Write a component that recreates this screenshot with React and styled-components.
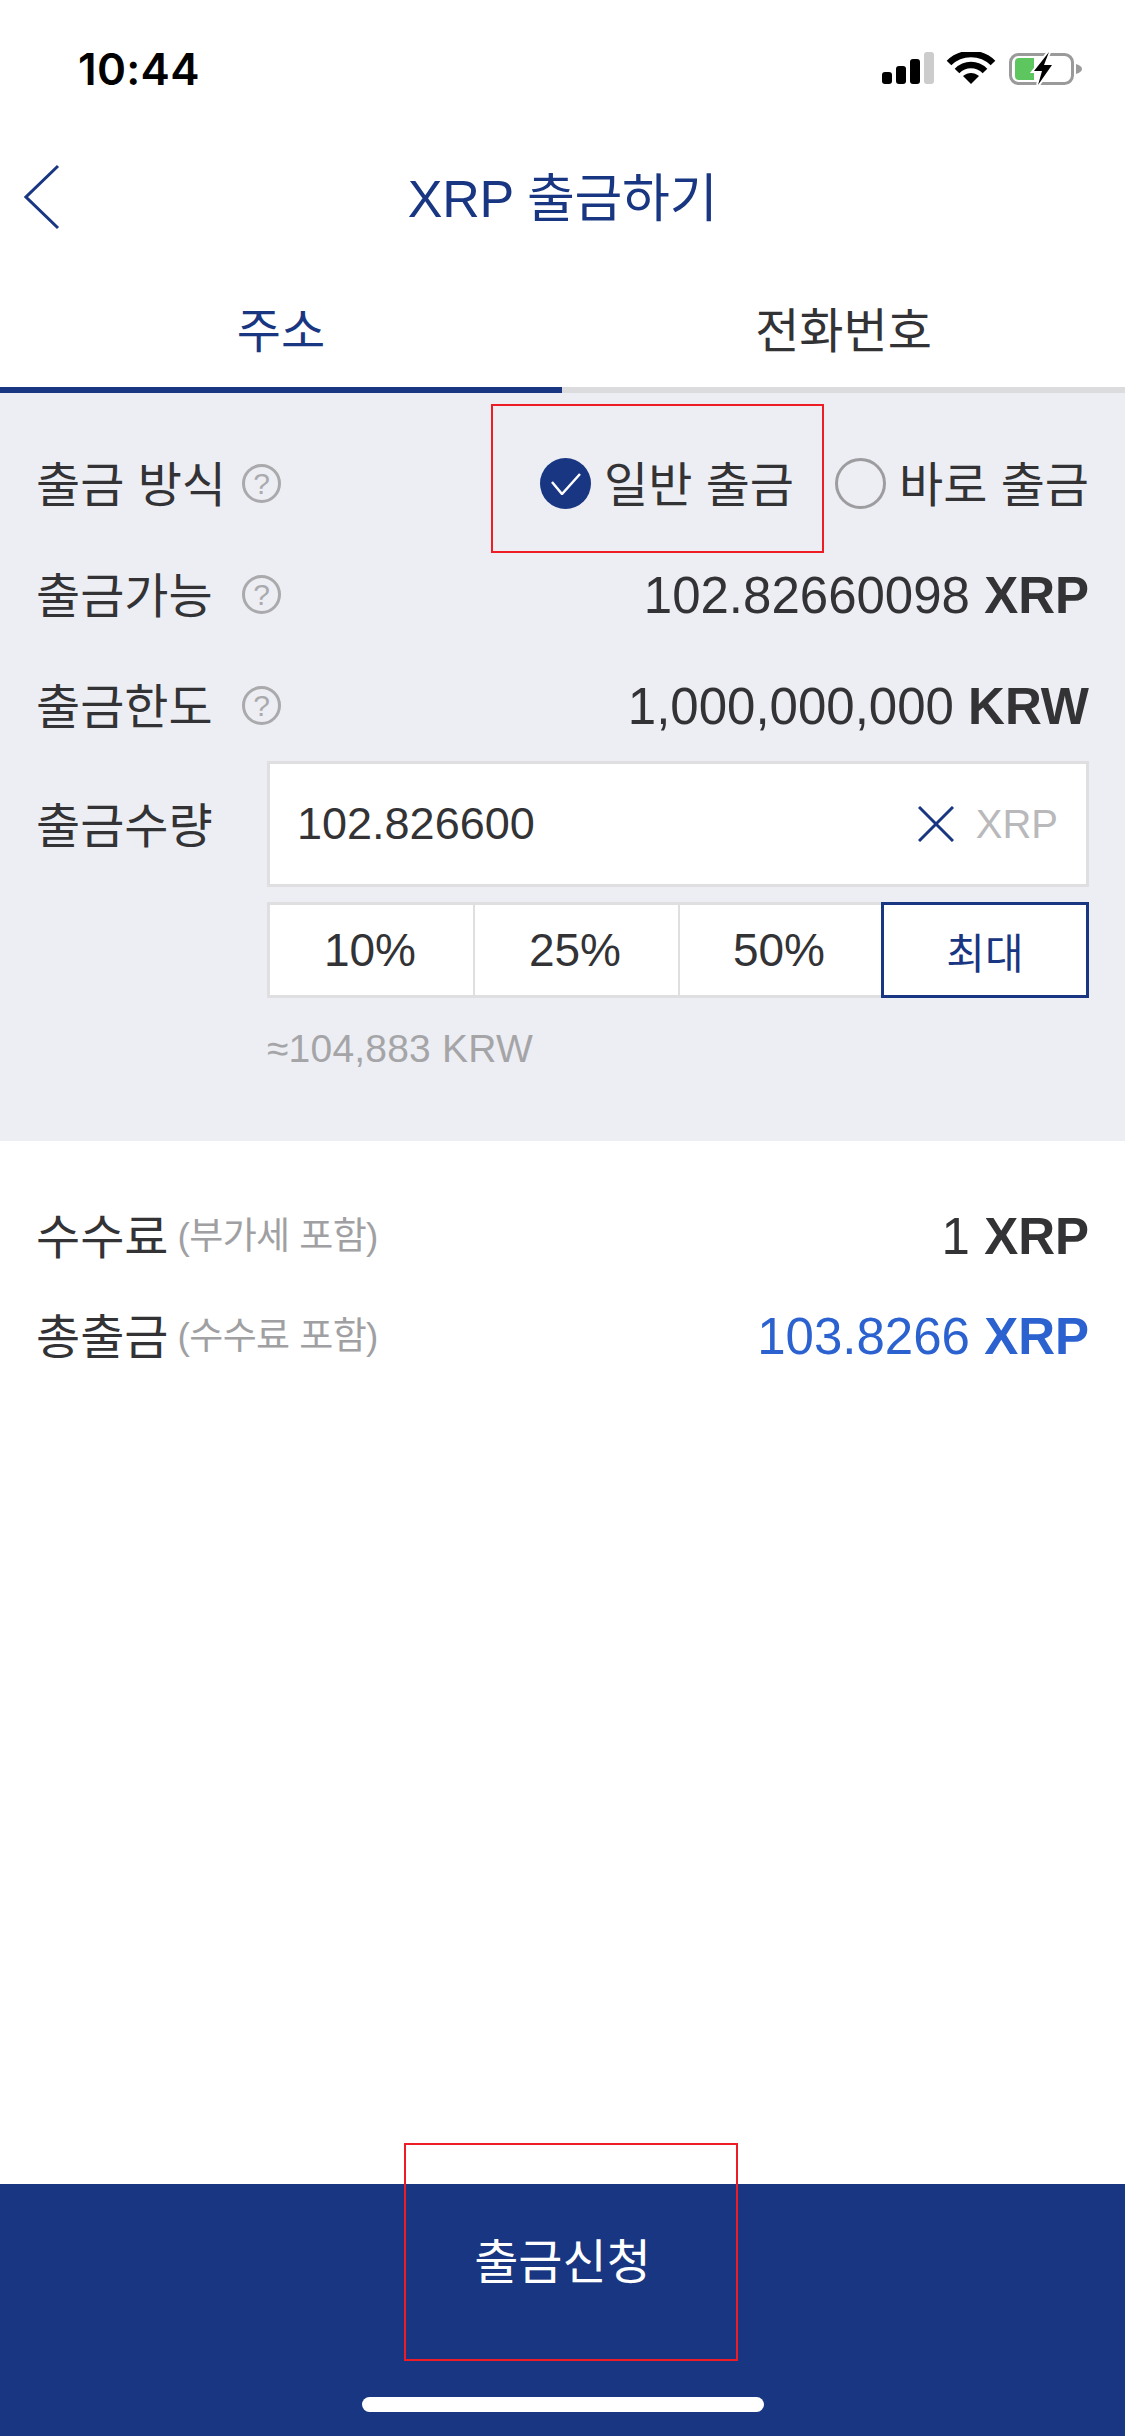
import React from "react";
import styled, { createGlobalStyle } from "styled-components";

const navy = "#183681";
const ink = "#333336";
const sans = `"Liberation Sans", "Noto Sans CJK KR", sans-serif`;

const GlobalStyle = createGlobalStyle`
  html, body {
    margin: 0;
    padding: 0;
    background: #fff;
  }
  * {
    box-sizing: border-box;
  }
`;

const Page = styled.div`
  width: 1125px;
  height: 2436px;
  display: flex;
  flex-direction: column;
  background: #fff;
  color: ${ink};
  font-family: ${sans};
  overflow: hidden;
`;

const StatusBar = styled.div`
  height: 136px;
  flex: none;
  display: flex;
  justify-content: space-between;
  align-items: flex-start;
  padding: 46px 43px 0 78px;
`;

const Time = styled.span`
  font-family: Inter, sans-serif;
  font-size: 44px;
  line-height: 46px;
  font-weight: 600;
  letter-spacing: 0.3px;
  color: #000;
`;

const StatusIcons = styled.svg`
  display: block;
  margin-top: 6px;
`;

const NavBar = styled.div`
  height: 122px;
  flex: none;
  display: grid;
  grid-template-columns: 90px 1fr 90px;
  align-items: center;
`;

const BackButton = styled.div`
  padding-left: 24px;
  display: flex;
  align-items: center;
`;

const Title = styled.h1`
  margin: 0;
  padding-bottom: 6px;
  text-align: center;
  font-size: 52px;
  font-weight: 400;
  color: ${navy};
  letter-spacing: -0.3px;
`;

const Tabs = styled.div`
  height: 135px;
  flex: none;
  display: grid;
  grid-template-columns: 562px 1fr;
`;

const Tab = styled.div`
  display: flex;
  align-items: center;
  justify-content: center;
  padding-top: 8px;
  font-size: 48px;
  border-bottom: 6px solid ${props => (props.$active ? navy : "#dcdcde")};
  color: ${props => (props.$active ? navy : ink)};
`;

const Panel = styled.section`
  height: 748px;
  flex: none;
  background: #edeef3;
  padding: 35px 36px 0 36px;
`;

const Row = styled.div`
  height: 111px;
  display: flex;
  align-items: center;
  justify-content: space-between;
`;

const LabelGroup = styled.div`
  display: flex;
  align-items: center;
`;

const Label = styled.span`
  font-size: 48px;
  white-space: nowrap;
  padding-bottom: 5px;
`;

const RowLabel = styled(Label)`
  width: 206px;
`;

const Help = styled.span`
  width: 39px;
  height: 39px;
  border: 3px solid #aaaaad;
  border-radius: 50%;
  display: flex;
  align-items: center;
  justify-content: center;
  font-size: 30px;
  line-height: 1;
  color: #aaaaad;
`;

const Options = styled.div`
  display: flex;
  align-items: center;
  gap: 41px;
`;

const Option = styled.div`
  position: relative;
  display: flex;
  align-items: center;
  gap: 13px;
  font-size: 48px;
`;

const OptionText = styled.span`
  padding-bottom: 5px;
`;

const Radio = styled.span`
  width: 51px;
  height: 51px;
  border-radius: 50%;
  display: flex;
  align-items: center;
  justify-content: center;
  background: ${props => (props.$checked ? navy : "transparent")};
  border: ${props => (props.$checked ? "none" : "3px solid #9d9da0")};
`;

const RedBox = styled.div`
  position: absolute;
  border: 2px solid #ee1c25;
  pointer-events: none;
`;

const OptionBox = styled(RedBox)`
  left: -49px;
  top: -42px;
  width: 333px;
  height: 149px;
`;

const Value = styled.span`
  font-size: 51px;
  white-space: nowrap;
  padding-top: 2px;
  color: ${props => props.$color || ink};
  b {
    font-weight: 700;
  }
`;

const AmountGrid = styled.div`
  display: grid;
  grid-template-columns: 231px 1fr;
`;

const AmountLabel = styled.div`
  height: 126px;
  display: flex;
  align-items: center;
`;

const AmountFields = styled.div`
  display: flex;
  flex-direction: column;
`;

const InputBox = styled.div`
  height: 126px;
  display: flex;
  align-items: center;
  background: #fff;
  border: 3px solid #dfdfe2;
  padding: 0 28px 0 27px;
`;

const InputValue = styled.span`
  flex: 1;
  font-size: 45px;
`;

const Unit = styled.span`
  margin-left: 22px;
  font-size: 40px;
  color: #b9b9bc;
`;

const Percents = styled.div`
  margin-top: 15px;
  height: 96px;
  display: grid;
  grid-template-columns: 206px 205px 203px 208px;
`;

const Percent = styled.div`
  display: flex;
  align-items: center;
  justify-content: center;
  background: #fff;
  font-size: 46px;
  padding-right: 3px;
  border-style: solid;
  border-color: #dfdfe2;
  border-width: 3px 0 3px ${props => (props.$first ? "3px" : "2px")};
`;

const MaxPercent = styled(Percent)`
  font-size: 42px;
  padding-right: 0;
  color: ${navy};
  border: 3px solid ${navy};
`;

const Approx = styled.div`
  margin-top: 28px;
  font-size: 39px;
  line-height: 46px;
  letter-spacing: 0.2px;
  color: #a5a5a8;
`;

const Fees = styled.section`
  padding: 44px 36px 0 36px;
`;

const FeeRow = styled.div`
  height: 100px;
  display: flex;
  align-items: center;
  justify-content: space-between;
`;

const FeeLabel = styled.div`
  display: flex;
  align-items: center;
  gap: 9px;
`;

const FeeNote = styled.span`
  font-size: 37px;
  letter-spacing: -0.6px;
  padding-bottom: 5px;
  color: #a0a0a3;
`;

const Spacer = styled.div`
  flex: 1;
`;

const Submit = styled.div`
  position: relative;
  height: 252px;
  flex: none;
  display: flex;
  flex-direction: column;
  align-items: center;
  background: ${navy};
  color: #fff;
`;

const SubmitLabel = styled.div`
  height: 153px;
  display: flex;
  align-items: center;
  padding-bottom: 6px;
  font-size: 48px;
`;

const SubmitBox = styled(RedBox)`
  left: 404px;
  top: -41px;
  width: 334px;
  height: 218px;
`;

const HomeIndicator = styled.div`
  margin-top: 60px;
  width: 402px;
  height: 15px;
  border-radius: 8px;
  background: #fff;
`;

const SvgIcon = styled.svg`
  display: block;
  flex: none;
`;

const Status = () => (
  <StatusIcons width="200" height="34" viewBox="0 0 200 34">
    <rect x="0" y="20" width="10" height="12" rx="3" fill="#000" />
    <rect x="14" y="14" width="10" height="18" rx="3" fill="#000" />
    <rect x="28" y="7" width="10" height="25" rx="3" fill="#000" />
    <rect x="42" y="0" width="10" height="32" rx="3" fill="#ccc" />
    <path d="M67 11 C79 -1 99 -1 111 11" fill="none" stroke="#000" strokeWidth="6.5" />
    <path d="M75 19 C83 11 95 11 103 19" fill="none" stroke="#000" strokeWidth="6.5" />
    <path d="M81 24 C86 20 92 20 97 24 L89 32 Z" fill="#000" />
    <rect x="128.5" y="2.5" width="62" height="29" rx="8" fill="none" stroke="#9a9a9a" strokeWidth="3" />
    <path d="M133 10 Q133 6 137 6 L152 6 L152 28 L137 28 Q133 28 133 24 Z" fill="#5ec65f" />
    <path d="M194 12 L194 22 Q200 20 200 17 Q200 14 194 12 Z" fill="#9a9a9a" />
    <path
      d="M167 0 L152 19 L160 19 L156 33 L170 13 L162 13 Z"
      fill="#000"
      stroke="#fff"
      strokeWidth="4"
      paintOrder="stroke"
    />
  </StatusIcons>
);

const Chevron = () => (
  <SvgIcon width="36" height="66" viewBox="0 0 36 66">
    <path d="M34 2 L2 33 L34 64" fill="none" stroke={navy} strokeWidth="3" />
  </SvgIcon>
);

const Check = () => (
  <SvgIcon width="30" height="22" viewBox="0 0 30 22">
    <path d="M1 9 L11 21 L29 1" fill="none" stroke="#fff" strokeWidth="2.5" />
  </SvgIcon>
);

const Close = () => (
  <SvgIcon width="36" height="36" viewBox="0 0 36 36">
    <path d="M1 1 L35 35 M35 1 L1 35" fill="none" stroke={navy} strokeWidth="3" />
  </SvgIcon>
);

const infoRows = [
  { label: "출금가능", amount: "102.82660098", unit: "XRP" },
  { label: "출금한도", amount: "1,000,000,000", unit: "KRW" }
];

const App = () => {
  return (
    <Page>
      <GlobalStyle />
      <StatusBar>
        <Time>10:44</Time>
        <Status />
      </StatusBar>
      <NavBar>
        <BackButton>
          <Chevron />
        </BackButton>
        <Title>XRP 출금하기</Title>
      </NavBar>
      <Tabs>
        <Tab $active>주소</Tab>
        <Tab>전화번호</Tab>
      </Tabs>
      <Panel>
        <Row>
          <LabelGroup>
            <RowLabel>출금 방식</RowLabel>
            <Help>?</Help>
          </LabelGroup>
          <Options>
            <Option>
              <OptionBox />
              <Radio $checked>
                <Check />
              </Radio>
              <OptionText>일반 출금</OptionText>
            </Option>
            <Option>
              <Radio />
              <OptionText>바로 출금</OptionText>
            </Option>
          </Options>
        </Row>
        {infoRows.map(row => (
          <Row key={row.label}>
            <LabelGroup>
              <RowLabel>{row.label}</RowLabel>
              <Help>?</Help>
            </LabelGroup>
            <Value>
              {row.amount} <b>{row.unit}</b>
            </Value>
          </Row>
        ))}
        <AmountGrid>
          <AmountLabel>
            <Label>출금수량</Label>
          </AmountLabel>
          <AmountFields>
            <InputBox>
              <InputValue>102.826600</InputValue>
              <Close />
              <Unit>XRP</Unit>
            </InputBox>
            <Percents>
              <Percent $first>10%</Percent>
              <Percent>25%</Percent>
              <Percent>50%</Percent>
              <MaxPercent>최대</MaxPercent>
            </Percents>
            <Approx>≈104,883 KRW</Approx>
          </AmountFields>
        </AmountGrid>
      </Panel>
      <Fees>
        <FeeRow>
          <FeeLabel>
            <Label>수수료</Label>
            <FeeNote>(부가세 포함)</FeeNote>
          </FeeLabel>
          <Value>
            1 <b>XRP</b>
          </Value>
        </FeeRow>
        <FeeRow>
          <FeeLabel>
            <Label>총출금</Label>
            <FeeNote>(수수료 포함)</FeeNote>
          </FeeLabel>
          <Value $color="#2b62d0">
            103.8266 <b>XRP</b>
          </Value>
        </FeeRow>
      </Fees>
      <Spacer />
      <Submit>
        <SubmitBox />
        <SubmitLabel>출금신청</SubmitLabel>
        <HomeIndicator />
      </Submit>
    </Page>
  );
};

export default App;
